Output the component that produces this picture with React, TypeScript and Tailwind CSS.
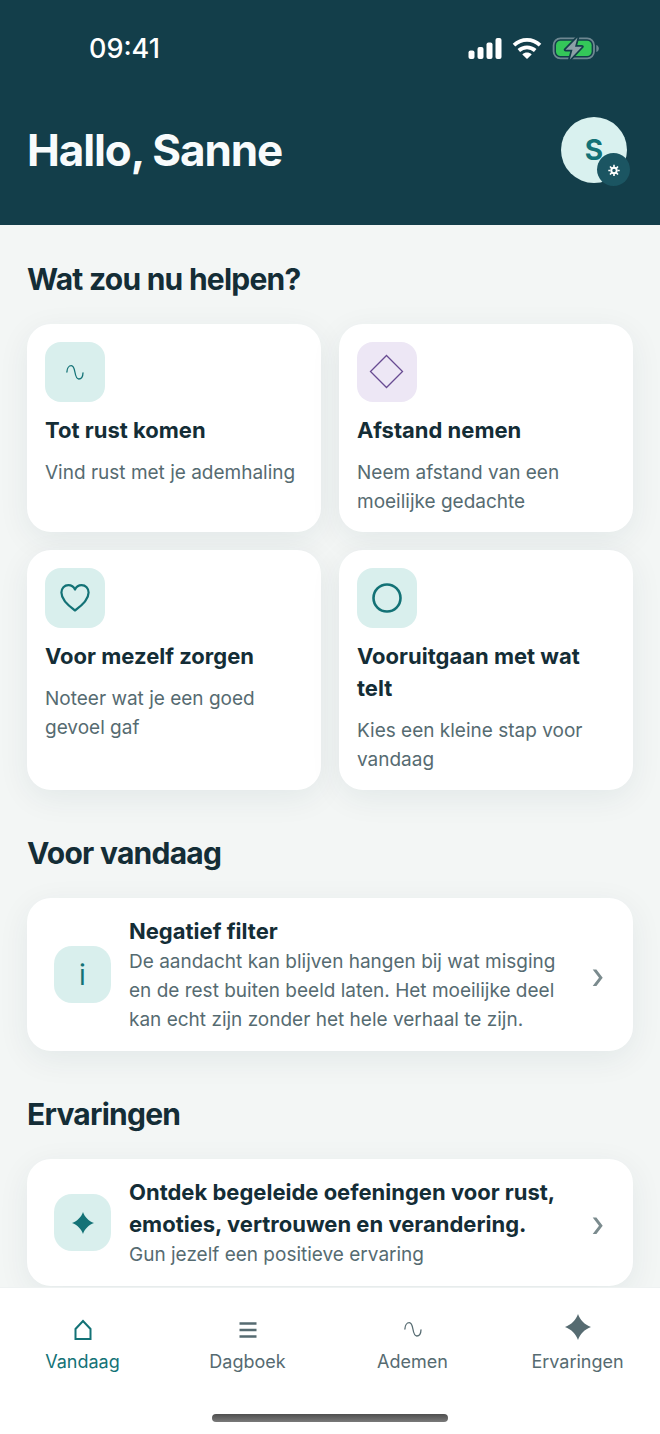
import type { ReactNode } from "react";

type IconProps = { className?: string };

const WaveIcon = ({ className }: IconProps) => (
  <svg className={className} viewBox="0 0 20 20" fill="none" stroke="currentColor" strokeWidth={1.3} strokeLinecap="round">
    <path d="M1.900 10C2 6.400 3.800 3.700 6.300 3.700C11.300 3.700 8.600 17 13.800 17C16.300 17 17.900 14.200 18 10.800" />
  </svg>
);

const DiamondIcon = () => (
  <svg className="size-9" viewBox="0 0 36 36" fill="none" stroke="currentColor" strokeWidth={1.3}>
    <path d="M17.500 1.500L33.500 17.500L17.500 33.500L1.500 17.500Z" />
  </svg>
);

const HeartIcon = () => (
  <svg className="size-8" viewBox="0 0 32 32" fill="none" stroke="currentColor" strokeWidth={2.2} strokeLinejoin="round">
    <path d="M16 7.600C14.600 4.600 12.200 3.200 9.400 3.200C5.400 3.200 2.400 6.200 2.400 10.600C2.400 17.400 8.600 23.300 16 28.500C23.400 23.300 29.600 17.400 29.600 10.600C29.600 6.200 26.600 3.200 22.600 3.200C19.800 3.200 17.400 4.600 16 7.600Z" />
  </svg>
);

const CircleIcon = () => (
  <svg className="size-8" viewBox="0 0 32 32" fill="none" stroke="currentColor" strokeWidth={2.6}>
    <circle cx="16" cy="16" r="13.500" />
  </svg>
);

const StarIcon = ({ className }: IconProps) => (
  <svg className={className} viewBox="0 0 24 24" fill="currentColor">
    <path d="M12 0C13.600 5.200 18.200 10 24 12C18.200 14 13.600 18.800 12 24C10.400 18.800 5.800 14 0 12C5.800 10 10.400 5.200 12 0Z" />
  </svg>
);

const HomeIcon = () => (
  <svg className="size-6" viewBox="0 0 24 24" fill="none" stroke="currentColor" strokeWidth={2}>
    <path d="M4.500 22V12L12 4L19.500 12V22Z" />
  </svg>
);

const MenuIcon = () => (
  <svg className="size-6" viewBox="0 0 24 24" fill="none" stroke="currentColor" strokeWidth={2.3}>
    <path d="M3.500 6.500H20.500M3.500 13H20.500M3.500 19.500H20.500" />
  </svg>
);

const ChevronIcon = () => (
  <svg className="h-6 w-4 shrink-0 text-[#7b8b8e]" viewBox="0 0 16 24" fill="currentColor">
    <path d="M2.700 6.500H6.400L12.700 14.700L6.400 22.900H2.700L9 14.700Z" />
  </svg>
);

const GearIcon = () => (
  <svg className="size-3" viewBox="0 0 12 12" fill="none" stroke="currentColor">
    <circle cx="6" cy="6.500" r="2.700" strokeWidth={1.9} />
    <path
      d="M6 0.800V3M6 10V12M0.300 6.500H2.500M9.500 6.500H11.700M2 2.500L3.600 4.100M8.400 8.900L10 10.500M10 2.500L8.400 4.100M3.600 8.900L2 10.500"
      strokeWidth={1.6}
    />
  </svg>
);

const actions = [
  {
    title: "Tot rust komen",
    text: "Vind rust met je ademhaling",
    icon: <WaveIcon className="size-5" />,
    tone: "bg-[#d9efed] text-[#137276]",
  },
  {
    title: "Afstand nemen",
    text: "Neem afstand van een moeilijke gedachte",
    icon: <DiamondIcon />,
    tone: "bg-[#ede7f5] text-[#684b92]",
  },
  {
    title: "Voor mezelf zorgen",
    text: "Noteer wat je een goed gevoel gaf",
    icon: <HeartIcon />,
    tone: "bg-[#d9efed] text-[#137276]",
  },
  {
    title: "Vooruitgaan met wat telt",
    text: "Kies een kleine stap voor vandaag",
    icon: <CircleIcon />,
    tone: "bg-[#d9efed] text-[#137276]",
  },
];

const tabs = [
  { label: "Vandaag", icon: <HomeIcon />, active: true },
  { label: "Dagboek", icon: <MenuIcon />, active: false },
  { label: "Ademen", icon: <WaveIcon className="size-5" />, active: false },
  { label: "Ervaringen", icon: <StarIcon className="mb-1 size-[26px]" />, active: false },
];

const StatusBar = () => (
  <div className="flex h-[98px] items-center justify-between pl-[89px] pr-[60px]">
    <span className="text-[27px] font-medium leading-8">09:41</span>
    <div className="flex items-center gap-2.5">
      {/* Signal */}
      <svg className="h-6 w-[34px]" viewBox="0 0 34 24" fill="currentColor">
        <rect x="0.500" y="13.500" width="6" height="8.500" rx="2" />
        <rect x="9.500" y="10" width="6" height="12" rx="2" />
        <rect x="18.500" y="5.500" width="6" height="16.500" rx="2" />
        <rect x="27.500" y="1" width="6" height="21" rx="2" />
      </svg>
      {/* Wifi */}
      <svg className="h-6 w-[30px]" viewBox="0 0 30 24" fill="none" stroke="currentColor" strokeWidth={3.8}>
        <path d="M2 8.200C9.500 1.200 20.500 1.200 28 8.200" />
        <path d="M6.800 13.500C11.600 9.300 18.400 9.300 23.200 13.500" />
        <path d="M15 22L10.300 17.400C13 15 17 15 19.700 17.400Z" fill="currentColor" stroke="none" />
      </svg>
      {/* Battery, charging */}
      <svg className="h-6 w-[48px]" viewBox="0 0 48 24" fill="none">
        <rect x="1.600" y="1.400" width="40.400" height="20" rx="6.800" stroke="#6e8791" strokeWidth={1.8} />
        <path d="M44.300 8C47.700 9 47.700 14 44.300 15Z" fill="#6e8791" />
        <rect x="4" y="3.800" width="35.600" height="15.200" rx="4.500" fill="#34c759" />
        <path
          d="M25.500 0.500L13.500 12.800H20.500L17.800 22.500L30 9.700H23Z"
          fill="#8c9fa7"
          stroke="#133e4a"
          strokeWidth={3.4}
          strokeLinejoin="round"
          paintOrder="stroke"
        />
      </svg>
    </div>
  </div>
);

type SectionProps = { title: string; children: ReactNode };

const Section = ({ title, children }: SectionProps) => (
  <section>
    <h2 className="mb-[27px] text-[30px] font-bold leading-9 tracking-tight">{title}</h2>
    {children}
  </section>
);

type ListCardProps = { title: string; text: string; icon: ReactNode };

const ListCard = ({ title, text, icon }: ListCardProps) => (
  <button
    type="button"
    className="flex w-full items-center gap-[18px] rounded-3xl bg-white px-[27px] py-[17px] text-left shadow-[0_8px_32px_rgba(19,62,74,0.07)]"
  >
    <span className="flex size-[57px] shrink-0 items-center justify-center rounded-[18px] bg-[#d9efed] text-[#137276]">
      {icon}
    </span>
    <span className="flex-1">
      <span className="block text-[22px] font-bold leading-8">{title}</span>
      <span className="block text-[19px] leading-[29px] text-[#566b71]">{text}</span>
    </span>
    <ChevronIcon />
  </button>
);

export default function App() {
  return (
    <div className="flex h-screen flex-col bg-[#f3f6f5] font-[Inter,sans-serif] text-[#142d36]">
      <header className="bg-[#133e4a] text-white">
        <StatusBar />
        <div className="flex items-center justify-between pb-[42px] pl-[27px] pr-[33px] pt-[19px]">
          <h1 className="text-[44px] font-bold leading-[52px] tracking-tight text-[#f8fbfc]">Hallo, Sanne</h1>
          <button
            type="button"
            aria-label="Profiel en instellingen"
            className="relative flex size-[66px] items-center justify-center rounded-full bg-[#d9f1ef] text-[28px] font-bold text-[#137276]"
          >
            S
            <span className="absolute -bottom-[3px] -right-[3px] flex size-[33px] items-center justify-center rounded-full bg-[#1b5562] text-white">
              <GearIcon />
            </span>
          </button>
        </div>
      </header>

      <main className="flex min-h-0 flex-1 flex-col gap-[45px] overflow-y-auto px-[27px] pt-9 [scrollbar-width:none]">
        <Section title="Wat zou nu helpen?">
          <div className="grid grid-cols-2 gap-[18px]">
            {actions.map((action) => (
              <button
                key={action.title}
                type="button"
                className="flex flex-col items-start rounded-3xl bg-white px-[18px] pb-4 pt-[18px] text-left shadow-[0_8px_32px_rgba(19,62,74,0.07)]"
              >
                <span className={`flex size-[60px] items-center justify-center rounded-2xl ${action.tone}`}>
                  {action.icon}
                </span>
                <span className="mt-3 text-[22px] font-bold leading-8">{action.title}</span>
                <span className="mt-3 text-[19px] leading-[29px] text-[#566b71]">{action.text}</span>
              </button>
            ))}
          </div>
        </Section>

        <Section title="Voor vandaag">
          <ListCard
            title="Negatief filter"
            text="De aandacht kan blijven hangen bij wat misging en de rest buiten beeld laten. Het moeilijke deel kan echt zijn zonder het hele verhaal te zijn."
            icon={<span className="text-[28px]">i</span>}
          />
        </Section>

        <Section title="Ervaringen">
          <ListCard
            title="Ontdek begeleide oefeningen voor rust, emoties, vertrouwen en verandering."
            text="Gun jezelf een positieve ervaring"
            icon={<StarIcon className="size-[22px]" />}
          />
        </Section>
      </main>

      {/* Bottom navigation */}
      <nav className="border-t border-[#eef2f2] bg-white pb-3 pt-[27px]">
        <div className="grid grid-cols-4">
          {tabs.map((tab) => (
            <a
              key={tab.label}
              href="#"
              aria-current={tab.active ? "page" : undefined}
              className={`flex flex-col items-center gap-[7px] text-[18px] leading-6 ${tab.active ? "text-[#137276]" : "text-[#566b71]"}`}
            >
              <span className="flex h-7 items-center">{tab.icon}</span>
              {tab.label}
            </a>
          ))}
        </div>
        <div className="mx-auto mt-10 h-2 w-[236px] rounded-full bg-linear-to-b from-[#4f4f4f] to-[#7a7a7a]" />
      </nav>
    </div>
  );
}
